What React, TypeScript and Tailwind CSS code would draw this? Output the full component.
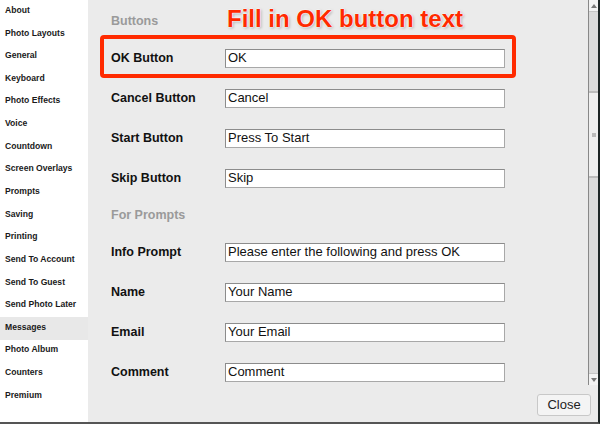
const navItems = [
  "About",
  "Photo Layouts",
  "General",
  "Keyboard",
  "Photo Effects",
  "Voice",
  "Countdown",
  "Screen Overlays",
  "Prompts",
  "Saving",
  "Printing",
  "Send To Account",
  "Send To Guest",
  "Send Photo Later",
  "Messages",
  "Photo Album",
  "Counters",
  "Premium",
];

type Row = { kind: "header"; text: string } | { kind: "field"; label: string; value: string };

const rows: Row[] = [
  { kind: "header", text: "Buttons" },
  { kind: "field", label: "OK Button", value: "OK" },
  { kind: "field", label: "Cancel Button", value: "Cancel" },
  { kind: "field", label: "Start Button", value: "Press To Start" },
  { kind: "field", label: "Skip Button", value: "Skip" },
  { kind: "header", text: "For Prompts" },
  { kind: "field", label: "Info Prompt", value: "Please enter the following and press OK" },
  { kind: "field", label: "Name", value: "Your Name" },
  { kind: "field", label: "Email", value: "Your Email" },
  { kind: "field", label: "Comment", value: "Comment" },
];

export default function App() {
  return (
    <div className="flex h-[424px] w-[600px] overflow-hidden border-r-2 border-b-2 border-r-[#1c2424] border-b-[#555] bg-[#ebebeb] font-['Liberation_Sans',Arial,sans-serif]">
      {/* Sidebar */}
      <div className="w-[88px] shrink-0 bg-white">
        {navItems.map((item) => (
          <div
            key={item}
            className={`flex h-[22.65px] items-center pb-[2px] pl-[5px] text-[8.6px] font-bold text-[#1a1a1a] ${
              item === "Messages" ? "bg-[#e8e8e8]" : ""
            }`}
          >
            {item}
          </div>
        ))}
      </div>

      {/* Main panel */}
      <div className="relative flex flex-1 flex-col">
        <div className="flex h-[385px]">
          <div className="relative flex-1 pt-[4px] pl-[23px]">
            {rows.map((row, i) =>
              row.kind === "header" ? (
                <div
                  key={i}
                  className="flex h-[34px] items-center text-[12.5px] font-bold text-[#9a9a9a]"
                >
                  {row.text}
                </div>
              ) : (
                <div key={i} className="flex h-[40px] items-center">
                  <div className="w-[114px] text-[12.5px] font-bold text-[#111]">{row.label}</div>
                  <div className="flex h-[19px] w-[280px] items-center border border-[#a8a8a8] border-t-[#8c8c8c] border-l-[#8c8c8c] bg-white pl-[2px] text-[13px] text-[#111]">
                    {row.value}
                  </div>
                </div>
              )
            )}

            {/* Annotation */}
            <div className="absolute top-[7px] left-[139px] text-[24px] leading-[24px] font-bold whitespace-nowrap text-[#ff2a00] [text-shadow:0_0_2px_#fff,0_0_2px_#fff,0_0_1px_#fff,1px_1px_3px_rgba(0,0,0,0.35)]">
              Fill in OK button text
            </div>
            <div className="absolute top-[35px] left-[12px] h-[43px] w-[416px] rounded-[4px] border-4 border-[#ff2a00]" />
          </div>

          {/* Scrollbar */}
          <div className="flex w-[10px] flex-col border-l border-[#888] bg-[#dadada]">
            <div className="flex h-[12px] items-center justify-center border-b border-[#c4c4c4] bg-[#f2f2f2]">
              <div className="h-0 w-0 border-x-[3px] border-b-[4px] border-x-transparent border-b-[#777]" />
            </div>
            <div className="h-[79px]" />
            <div className="flex h-[87px] items-center justify-center border-y-2 border-[#bcbcbc] bg-[#efefef]">
              <div className="h-[4px] w-[4px] bg-[#bbb]" />
            </div>
            <div className="flex-1" />
            <div className="flex h-[12px] items-center justify-center border-t border-[#c4c4c4] bg-[#f2f2f2]">
              <div className="h-0 w-0 border-x-[3px] border-t-[4px] border-x-transparent border-t-[#777]" />
            </div>
          </div>
        </div>

        {/* Footer */}
        <div className="flex flex-1 items-start justify-end pt-[9px] pr-[7px]">
          <button className="flex h-[22px] w-[54px] items-center justify-center rounded-[3px] border border-[#c8c8c8] bg-[#f4f4f4] text-[13px] text-[#222]">
            Close
          </button>
        </div>
      </div>
    </div>
  );
}
